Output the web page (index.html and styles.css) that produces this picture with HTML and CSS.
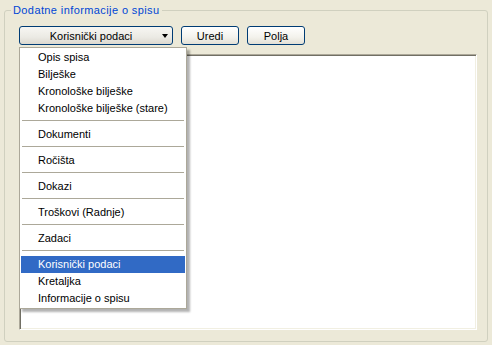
FILE: index.html
```html
<!DOCTYPE html>
<html lang="hr">
  <head>
    <meta charset="UTF-8" />
    <title>Dodatne informacije o spisu</title>
    <link rel="stylesheet" href="styles.css">
  </head>
  <body>
    <fieldset class="group">
      <legend>Dodatne informacije o spisu</legend>
      <div class="group-body">
        <div class="toolbar">
          <button class="btn dropdown">
            <span class="label">Korisnički podaci</span>
            <span class="arrow"></span>
          </button>
          <button class="btn">Uredi</button>
          <button class="btn">Polja</button>

          <!-- open dropdown list -->
          <div class="menu">
            <div class="item">Opis spisa</div>
            <div class="item">Bilješke</div>
            <div class="item">Kronološke bilješke</div>
            <div class="item">Kronološke bilješke (stare)</div>
            <div class="sep"></div>
            <div class="item">Dokumenti</div>
            <div class="sep"></div>
            <div class="item">Ročišta</div>
            <div class="sep"></div>
            <div class="item">Dokazi</div>
            <div class="sep"></div>
            <div class="item">Troškovi (Radnje)</div>
            <div class="sep"></div>
            <div class="item">Zadaci</div>
            <div class="sep"></div>
            <div class="item selected">Korisnički podaci</div>
            <div class="item">Kretaljka</div>
            <div class="item">Informacije o spisu</div>
          </div>
        </div>
        <div class="editor"></div>
      </div>
    </fieldset>
  </body>
</html>
```

FILE: styles.css
```css
html,
body {
  margin: 0;
  height: 345px;
  overflow: hidden;
}

body {
  background-color: #ece9d8;
  font-family: "Liberation Sans", Arial, sans-serif;
  font-size: 11px;
  color: #000;
}

.group {
  box-sizing: border-box;
  height: 338px;
  margin: 4px 4px 3px 4px;
  padding: 0;
  border: 1px solid #d0d0bf;
  border-radius: 3px;
}

.group legend {
  margin-left: 6px;
  padding: 0 2px;
  line-height: 13px;
  letter-spacing: 0.4px;
  color: #0046d5;
}

.group-body {
  padding: 9px 10px 11px 14px;
}

.toolbar {
  position: relative;
  display: flex;
  gap: 8px;
}

.btn {
  box-sizing: border-box;
  display: flex;
  align-items: center;
  justify-content: center;
  width: 58px;
  height: 19px;
  padding: 0;
  border: 1px solid #003c74;
  border-radius: 3px;
  background: linear-gradient(#ffffff, #f3f2ec 60%, #e3e0d6);
  font-family: inherit;
  font-size: 11px;
  color: #000;
}

.dropdown {
  width: 154px;
  background: linear-gradient(#f7f6f2, #ebeae4 60%, #dcd9cf);
}

.dropdown .label {
  flex: 1;
  text-align: center;
}

.arrow {
  width: 0;
  height: 0;
  margin-right: 4px;
  border-left: 3.5px solid transparent;
  border-right: 3.5px solid transparent;
  border-top: 4px solid #000;
}

.menu {
  position: absolute;
  top: 21px;
  left: 0;
  width: 168px;
  box-sizing: border-box;
  padding: 1px;
  border: 1px solid #aca899;
  background: #fff;
  box-shadow: 3px 3px 2px rgba(0, 0, 0, 0.3);
  z-index: 2;
}

.item {
  height: 17px;
  line-height: 17px;
  padding-left: 17px;
  white-space: nowrap;
}

.item.selected {
  background-color: #316ac5;
  color: #fff;
}

.sep {
  height: 1px;
  margin: 3px 1px 5px;
  background-color: #aca899;
}

.editor {
  box-sizing: border-box;
  width: 458px;
  height: 276px;
  margin-top: 9px;
  border: 1px solid;
  border-color: #aca899 #ffffff #ffffff #aca899;
  box-shadow: inset 1px 1px #716f64, inset -1px -1px #f1efe2;
  background: #fff;
}
```
